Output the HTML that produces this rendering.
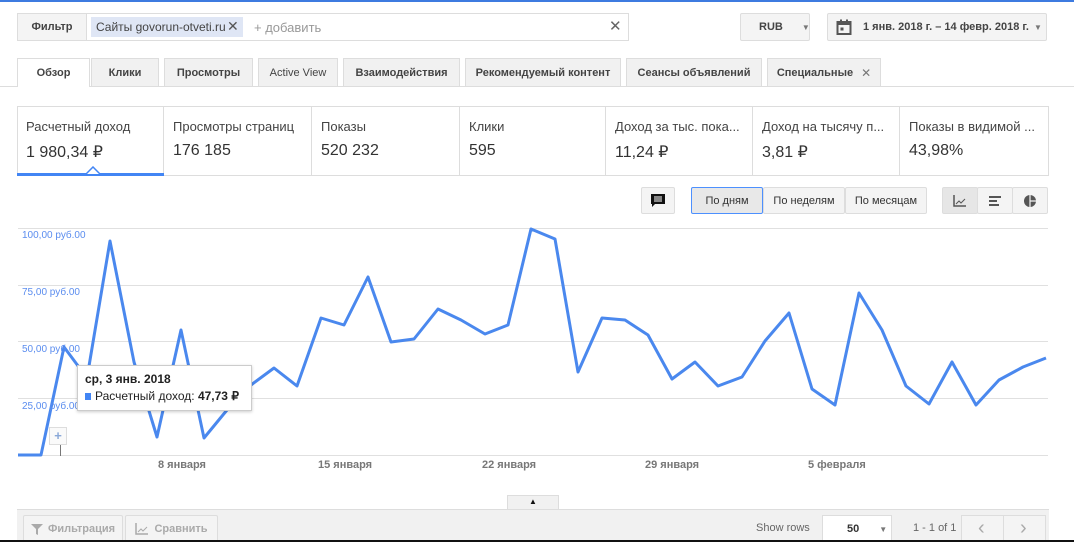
<!DOCTYPE html>
<html><head><meta charset="utf-8"><style>
*{box-sizing:border-box;margin:0;padding:0;white-space:nowrap}
body{width:1074px;height:542px;overflow:hidden;background:#fff;font-family:"Liberation Sans",Arial,sans-serif;position:relative;color:#333}
.a{position:absolute}
.btn{position:absolute;background:#f4f4f4;border:1px solid #ddd;border-radius:2px;font-size:11px;font-weight:bold;color:#444;display:flex;align-items:center;justify-content:center}
.tab{position:absolute;top:58px;height:28px;background:#f1f1f1;border:1px solid #ddd;border-bottom:none;font-size:11px;font-weight:bold;color:#444;display:flex;align-items:center;justify-content:center}
.card{position:absolute;top:106px;height:69px;border-right:1px solid #ddd;padding:13px 0 0 9px}
.card .l{font-size:13px;color:#444}
.card .v{font-size:16px;color:#333;margin-top:8px}
.yl{position:absolute;left:22px;font-size:10px;color:#5b8def}
.xl{position:absolute;top:459px;font-size:11px;font-weight:bold;color:#777}
</style></head><body>
<div class="a" style="left:0;top:0;width:1074px;height:2px;background:#3d7be0"></div>
<div class="a" style="left:17px;top:13px;width:612px;height:28px;border:1px solid #ddd;background:#fff"></div>
<div class="btn" style="left:17px;top:13px;width:70px;height:28px;border-radius:0">Фильтр</div>
<div class="a" style="left:91px;top:17px;width:152px;height:20px;background:#dfe6f5;font-size:12px;color:#444;padding:3px 0 0 5px">Сайты govorun-otveti.ru</div>
<div class="a" style="left:227px;top:18px;font-size:14px;color:#555">✕</div>
<div class="a" style="left:254px;top:20px;font-size:13px;color:#999">+ добавить</div>
<div class="a" style="left:609px;top:17px;font-size:15px;color:#666">✕</div>
<div class="btn" style="left:740px;top:13px;width:70px;height:28px;justify-content:flex-start;padding-left:18px">RUB<span style="margin-left:19px;font-size:8px;color:#777">▼</span></div>
<div class="btn" style="left:827px;top:13px;width:220px;height:28px;justify-content:flex-start;padding-left:8px">
<svg width="16" height="16" viewBox="0 0 16 16"><rect x="1.5" y="3" width="13" height="12" fill="none" stroke="#555" stroke-width="2"/><rect x="1.5" y="3" width="13" height="3" fill="#555"/><rect x="4" y="0.5" width="2" height="3" fill="#555"/><rect x="10" y="0.5" width="2" height="3" fill="#555"/><rect x="4.5" y="8.5" width="3" height="3" fill="#555"/></svg>
<span style="margin-left:11px">1 янв. 2018 г. – 14 февр. 2018 г.</span><span style="margin-left:5px;font-size:8px;color:#777">▼</span></div>
<div class="a" style="left:0;top:86px;width:1074px;height:1px;background:#ddd"></div>
<div class="tab" style="left:17px;width:73px;background:#fff;height:29px">Обзор</div>
<div class="tab" style="left:91px;width:68px">Клики</div>
<div class="tab" style="left:164px;width:89px">Просмотры</div>
<div class="tab" style="left:258px;width:80px;font-weight:normal">Active View</div>
<div class="tab" style="left:343px;width:117px">Взаимодействия</div>
<div class="tab" style="left:465px;width:156px">Рекомендуемый контент</div>
<div class="tab" style="left:626px;width:136px">Сеансы объявлений</div>
<div class="tab" style="left:767px;width:114px">Специальные <span style="margin-left:8px;font-size:12px;color:#777;font-weight:normal">✕</span></div>
<div class="a" style="left:17px;top:106px;width:1032px;height:70px;border:1px solid #ddd"></div>
<div class="card" style="left:17px;width:147px"><div class="l">Расчетный доход</div><div class="v">1 980,34 ₽</div></div>
<div class="card" style="left:164px;width:148px"><div class="l">Просмотры страниц</div><div class="v">176 185</div></div>
<div class="card" style="left:312px;width:148px"><div class="l">Показы</div><div class="v">520 232</div></div>
<div class="card" style="left:460px;width:146px"><div class="l">Клики</div><div class="v">595</div></div>
<div class="card" style="left:606px;width:147px"><div class="l">Доход за тыс. пока...</div><div class="v">11,24 ₽</div></div>
<div class="card" style="left:753px;width:147px"><div class="l">Доход на тысячу п...</div><div class="v">3,81 ₽</div></div>
<div class="card" style="left:900px;width:148px;border-right:none"><div class="l">Показы в видимой ...</div><div class="v">43,98%</div></div>
<div class="a" style="left:17px;top:173px;width:147px;height:3px;background:#4285f4"></div>
<svg class="a" style="left:86px;top:166px" width="14" height="9"><path d="M0 8 L7 1 L14 8" fill="#fff" stroke="#4285f4" stroke-width="1.5"/></svg>
<div class="btn" style="left:641px;top:187px;width:34px;height:27px"><svg width="16" height="16" viewBox="0 0 16 16"><path d="M1 1h14v10H5l-3 3v-3H1z" fill="#111"/><path d="M4 4h8M4 6h8M4 8h8" stroke="#fff" stroke-width="1"/></svg></div>
<div class="btn" style="left:691px;top:187px;width:72px;height:27px;border-color:#4d90fe;background:#e8e8e8;font-weight:normal;color:#333">По дням</div>
<div class="btn" style="left:763px;top:187px;width:82px;height:27px;font-weight:normal;color:#333">По неделям</div>
<div class="btn" style="left:845px;top:187px;width:82px;height:27px;font-weight:normal;color:#333">По месяцам</div>
<div class="btn" style="left:942px;top:187px;width:36px;height:27px;background:#e6e6e6"><svg width="14" height="12"><path d="M1 0v11h12" fill="none" stroke="#555" stroke-width="1.5"/><path d="M3 9l3-3 2 2 4-4" fill="none" stroke="#555"/></svg></div>
<div class="btn" style="left:977px;top:187px;width:36px;height:27px"><svg width="12" height="12"><rect x="0" y="1" width="12" height="2" fill="#555"/><rect x="0" y="5" width="8" height="2" fill="#555"/><rect x="0" y="9" width="10" height="2" fill="#555"/></svg></div>
<div class="btn" style="left:1012px;top:187px;width:36px;height:27px"><svg width="12" height="12"><circle cx="6" cy="6" r="6" fill="#555"/><path d="M6 0v12M6 6h6" stroke="#f4f4f4" stroke-width="1.2"/></svg></div>
<svg class="a" style="left:0;top:0" width="1074" height="542">
<g stroke="#e0e0e0" stroke-width="1"><line x1="18" y1="228.5" x2="1048" y2="228.5"/><line x1="18" y1="285.5" x2="1048" y2="285.5"/><line x1="18" y1="341.5" x2="1048" y2="341.5"/><line x1="18" y1="398.5" x2="1048" y2="398.5"/><line x1="18" y1="455.5" x2="1048" y2="455.5"/></g>
<line x1="60.5" y1="445" x2="60.5" y2="456" stroke="#777"/>
<polyline fill="none" stroke="#4a88ee" stroke-width="3" stroke-linejoin="round" points="18,455 41,455 64,347 87,378 110,241 134,362 157,437 181,330 204,438 227,410 251,385 274,368 297,386 321,318 344,325 368,277 391,342 414,339 438,309 461,320 485,334 508,325 531,229 555,239 578,372 602,318 625,320 648,335 672,379 695,362 718,386 742,377 765,341 789,313 812,389 835,405 859,293 882,330 906,386 929,404 952,362 976,405 999,380 1023,367 1046,358"/>
</svg>
<div class="yl" style="top:230px">100,00 руб.00</div>
<div class="yl" style="top:287px">75,00 руб.00</div>
<div class="yl" style="top:344px">50,00 руб.00</div>
<div class="yl" style="top:401px">25,00 руб.00</div>
<div class="a" style="left:49px;top:427px;width:18px;height:18px;border:1px solid #ddd;background:#fafafa;color:#8aa8d8;font-weight:bold;font-size:13px;text-align:center;line-height:16px">+</div>
<div class="a" style="left:77px;top:365px;width:175px;height:46px;background:#fff;border:1px solid #ccc;box-shadow:0 1px 3px rgba(0,0,0,.2);padding:6px 0 0 7px">
<div style="font-size:12px;font-weight:bold;color:#222">ср, 3 янв. 2018</div>
<div style="font-size:12px;color:#222;margin-top:3px"><span style="display:inline-block;width:6px;height:7px;background:#4285f4;margin-right:4px"></span>Расчетный доход: <b>47,73 ₽</b></div></div>
<div class="xl" style="left:158px">8 января</div>
<div class="xl" style="left:318px">15 января</div>
<div class="xl" style="left:482px">22 января</div>
<div class="xl" style="left:645px">29 января</div>
<div class="xl" style="left:808px">5 февраля</div>
<div class="a" style="left:507px;top:495px;width:52px;height:15px;background:#f1f1f1;border:1px solid #ddd;border-bottom:none;text-align:center;font-size:8px;line-height:12px;color:#111">▲</div>
<div class="a" style="left:17px;top:509px;width:1032px;height:33px;background:#f1f1f1;border-top:1px solid #ddd"></div>
<div class="btn" style="left:23px;top:515px;width:100px;height:27px;color:#aaa;border-bottom:none"><svg width="12" height="12" style="margin-right:5px"><path d="M0 1h12L7 6v6L5 11V6z" fill="#aaa"/></svg>Фильтрация</div>
<div class="btn" style="left:125px;top:515px;width:93px;height:27px;color:#aaa;border-bottom:none"><svg width="13" height="12" style="margin-right:6px"><path d="M1 0v11h12" fill="none" stroke="#aaa" stroke-width="1.5"/><path d="M3 9l3-3 2 2 4-4" fill="none" stroke="#aaa"/></svg>Сравнить</div>
<div class="a" style="left:756px;top:522px;font-size:11px;color:#666">Show rows</div>
<div class="a" style="left:822px;top:515px;width:70px;height:27px;background:#fff;border:1px solid #ddd;font-size:11px;font-weight:bold;color:#333;padding:7px 0 0 24px">50<span style="margin-left:20px;font-size:8px;color:#777">▼</span></div>
<div class="a" style="left:913px;top:522px;font-size:11px;color:#666">1 - 1 of 1</div>
<div class="a" style="left:961px;top:515px;width:85px;height:27px;background:#f4f4f4;border:1px solid #ddd"></div>
<div class="a" style="left:1003px;top:515px;width:1px;height:27px;background:#ddd"></div>
<div class="a" style="left:978px;top:516px;font-size:20px;color:#aaa;line-height:24px">‹</div>
<div class="a" style="left:1020px;top:516px;font-size:20px;color:#aaa;line-height:24px">›</div>
<div class="a" style="left:0;top:540px;width:1074px;height:2px;background:#111"></div>
</body></html>
